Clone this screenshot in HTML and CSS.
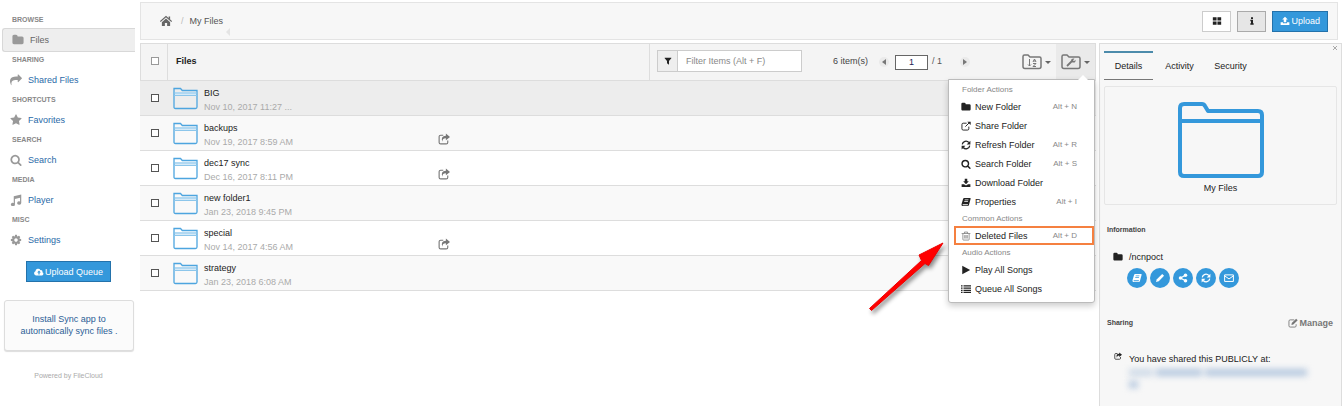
FILE: index.html
```html
<!DOCTYPE html>
<html lang="en">
<head>
<meta charset="utf-8">
<title>My Files</title>
<link rel="stylesheet" href="styles.css">
</head>
<body>
<svg class="sprite" aria-hidden="true">
  <symbol id="folder" viewBox="0 0 1792 1792"><path d="M1728 608v704q0 92-66 158t-158 66h-1216q-92 0-158-66t-66-158v-960q0-92 66-158t158-66h320q92 0 158 66t66 158v32h672q92 0 158 66t66 158z"/></symbol>
  <symbol id="forward" viewBox="0 0 1792 1792"><path d="M1792 640q0 26-19 45l-512 512q-19 19-45 19t-45-19-19-45v-256h-224q-98 0-175.500 6t-154 21.500-133 42.500-105.500 69.500-80 101-48.500 138.500-17.500 181q0 55 5 123 0 6 2.500 23.500t2.500 26.500q0 15-8.500 25t-23.500 10q-16 0-28-17-7-9-13-22t-13.500-30-10.500-24q-127-285-127-451 0-199 53-333 162-403 875-403h224v-256q0-26 19-45t45-19 45 19l512 512q19 19 19 45z"/></symbol>
  <symbol id="star" viewBox="0 0 1792 1792"><path d="M1728 647q0 22-26 48l-363 354 86 500q1 7 1 20 0 21-10.500 35.500t-30.500 14.500q-19 0-40-12l-449-236-449 236q-22 12-40 12-21 0-31.500-14.500t-10.500-35.500q0-6 2-20l86-500-364-354q-25-27-25-48 0-37 56-46l502-73 225-455q19-41 49-41t49 41l225 455 502 73q56 9 56 46z"/></symbol>
  <symbol id="search" viewBox="0 0 1792 1792"><path d="M1216 832q0-185-131.500-316.500t-316.500-131.500-316.500 131.500-131.500 316.500 131.500 316.500 316.500 131.500 316.500-131.500 131.500-316.500zm512 832q0 52-38 90t-90 38q-54 0-90-38l-343-342q-179 124-399 124-143 0-273.500-55.500t-225-150-150-225-55.500-273.500 55.500-273.500 150-225 225-150 273.500-55.500 273.500 55.500 225 150 150 225 55.500 273.500q0 220-124 399l343 343q37 37 37 90z"/></symbol>
  <symbol id="cog" viewBox="0 0 1792 1792"><path d="M1152 896q0-106-75-181t-181-75-181 75-75 181 75 181 181 75 181-75 75-181zm512-109v222q0 12-8 23t-20 13l-185 28q-19 54-39 91 35 50 107 138 10 12 10 25t-9 23q-27 37-99 108t-94 71q-12 0-26-9l-138-108q-44 23-91 38-16 136-29 186-7 28-36 28h-222q-14 0-24.500-8.500t-11.500-21.500l-28-184q-49-16-90-37l-141 107q-10 9-25 9-14 0-25-11-126-114-165-168-7-10-7-23 0-12 8-23 15-21 51-66.500t54-70.500q-27-50-41-99l-183-27q-13-2-21-12.500t-8-23.500v-222q0-12 8-23t19-13l186-28q14-46 39-92-40-57-107-138-10-12-10-24 0-10 9-23 26-36 98.500-107.500t94.500-71.500q13 0 26 10l138 107q44-23 91-38 16-136 29-186 7-28 36-28h222q14 0 24.500 8.500t11.500 21.500l28 184q49 16 90 37l142-107q9-9 24-9 13 0 25 10 129 119 165 170 7 8 7 22 0 12-8 23-15 21-51 66.500t-54 70.500q26 50 41 98l183 28q13 2 21 12.500t8 23.500z"/></symbol>
  <symbol id="music" viewBox="0 0 16 16"><path d="M5 3l10-2.500v11.500a2.700 2.200 0 1 1-1.600-2V5L6.600 6.700V14a2.700 2.200 0 1 1-1.600-2z"/></symbol>
  <symbol id="home" viewBox="0 0 16 16"><path d="M8 4.800l5.500 4.700V14.500h-4v-4h-3v4h-4V9.500z"/><path d="M.4 8.700L8 2.200l7.600 6.500" fill="none" stroke="currentColor" stroke-width="1.600"/><path d="M11.500 2h2v4l-2-1.700z"/></symbol>
  <symbol id="cloud" viewBox="0 0 16 16"><path fill-rule="evenodd" d="M3.500 13.500a3.500 3.500 0 0 1-1.200-6.700A4.300 4.300 0 0 1 10.400 5a2.500 2.500 0 0 1 3 3.200 2.800 2.800 0 0 1-.6 5.300zM8 5.500L5 8.800h2V12h2V8.800h2z"/></symbol>
  <symbol id="grid" viewBox="0 0 12 12"><path d="M1 1.500h4.500v4H1zM6.500 1.500H11v4H6.500zM1 6.500h4.500v4H1zM6.500 6.500H11v4H6.500z"/></symbol>
  <symbol id="info" viewBox="0 0 12 12"><path d="M4.500.5h3v2.500h-3zM3.500 4.200h4v5.300h1v2h-5v-2h1V6.200h-1z"/></symbol>
  <symbol id="upload" viewBox="0 0 16 16"><path d="M8 1l4.500 4.700H10V10H6V5.700H3.500zM1 10h3.800v1.500h6.400V10H15v4.500H1z"/></symbol>
  <symbol id="download" viewBox="0 0 16 16"><path d="M6 1h4v4.300h2.500L8 10 3.500 5.300H6zM1 10h3.800l3.200 2 3.200-2H15v4.500H1z"/></symbol>
  <symbol id="filter" viewBox="0 0 12 12"><path d="M1 1h10v1L7.500 6v5.500l-3-2V6L1 2z"/></symbol>
  <symbol id="external" viewBox="0 0 16 16"><path d="M9 3.500H3.500a2 2 0 0 0-2 2v7a2 2 0 0 0 2 2h7a2 2 0 0 0 2-2V9M7 9l6-6" fill="none" stroke="currentColor" stroke-width="1.500"/><path d="M10 1h5.500v5.500z"/></symbol>
  <symbol id="refresh" viewBox="0 0 16 16"><path d="M2 7a6 6 0 0 1 10.500-3M14 9a6 6 0 0 1-10.500 3" fill="none" stroke="currentColor" stroke-width="2"/><path d="M15 1v6H9zM1 15V9h6z"/></symbol>
  <symbol id="book" viewBox="0 0 16 16"><path fill-rule="evenodd" d="M5 1.500h9.500q1.200.2.900 1.400l-2.600 9.600q-.4 2-2 2H2.500Q.2 14 .8 11.500L3.300 3Q3.800 1.500 5 1.500zM6 4l-.3 1h6l.3-1zm-.7 2.500l-.3 1h6l.3-1zM2.700 11.700q-.4 1.300.6 1.300h7.400l.5-1.300z"/></symbol>
  <symbol id="trash" viewBox="0 0 16 16"><path d="M3 4.500v9q0 1 1 1h8q1 0 1-1v-9M1 4h14M5.500 4V1.700h5V4M6 6.500v5.500M8 6.500v5.500M10 6.500v5.500" fill="none" stroke="currentColor" stroke-width="1.200"/></symbol>
  <symbol id="play" viewBox="0 0 12 12"><path d="M1.500 1L11 6l-9.500 5z"/></symbol>
  <symbol id="list" viewBox="0 0 16 16"><path d="M0 2h2.500v2H0zM4 2h12v2H4zM0 5.500h2.500v2H0zM4 5.500h12v2H4zM0 9h2.500v2H0zM4 9h12v2H4zM0 12.500h2.500v2H0zM4 12.500h12v2H4z"/></symbol>
  <symbol id="shared" viewBox="0 0 16 16"><path d="M7 3H3.500a2 2 0 0 0-2 2v7.500a2 2 0 0 0 2 2H11a2 2 0 0 0 2-2V10" fill="none" stroke="currentColor" stroke-width="1.500"/><path d="M10.500.8L16 5.300l-5.500 4.500V7Q6 6.800 5.800 11.500 3 4 10.500 3.600z"/></symbol>
  <symbol id="pencil" viewBox="0 0 16 16"><path d="M11.500 1.500l3 3L6 13l-4.500 1.500L3 10z"/></symbol>
  <symbol id="nodes" viewBox="0 0 16 16"><path d="M12 3.500L4 8l8 4.500" fill="none" stroke="currentColor" stroke-width="2"/><circle cx="12" cy="3.500" r="2.800"/><circle cx="4" cy="8" r="2.800"/><circle cx="12" cy="12.500" r="2.800"/></symbol>
  <symbol id="mail" viewBox="0 0 16 16"><path d="M1 3h14v10.500H1zM1 4.500l7 5 7-5" fill="none" stroke="currentColor" stroke-width="1.600"/></symbol>
  <symbol id="edit" viewBox="0 0 16 16"><path d="M10 3H3.500a2 2 0 0 0-2 2v7.500a2 2 0 0 0 2 2H11a2 2 0 0 0 2-2V10" fill="none" stroke="currentColor" stroke-width="1.400"/><path d="M13 1l2.500 2.500-7 7L5.500 11 6 8z"/></symbol>
  <symbol id="bigfolder" viewBox="0 0 86 76"><path d="M2 19V6q0-4 4-4h18q2 0 3 2l3 5h50q4 0 4 4v57q0 4-4 4H6q-4 0-4-4zh82" fill="none" stroke="#3498db" stroke-width="4" stroke-linejoin="round"/></symbol>
  <symbol id="rowfolder" viewBox="0 0 25 23"><path d="M1 5h23v3H1z" fill="#d5eaf8"/><path d="M1 20V1.500h6.500l1.800 2H24V20q0 1.500-1.500 1.500h-20Q1 21.500 1 20z" fill="none" stroke="#4da5df" stroke-width="1.300"/><path d="M1 6h23M1 8.500h23" stroke="#8cc6eb" fill="none"/></symbol>
  <symbol id="toolfolder" viewBox="0 0 20 16"><path d="M1 12.500v-10Q1 1 2.500 1H6l2 2h9.500Q19 3 19 4.500v8q0 2-2 2H3q-2 0-2-2z" fill="none" stroke="currentColor" stroke-width="1.500"/></symbol>
</svg>

<div class="app">
  <nav class="sidebar">
    <h2 class="label">BROWSE</h2>
    <a class="nav active" href="#"><svg class="icon large"><use href="#folder"/></svg>Files</a>
    <h2 class="label">SHARING</h2>
    <a class="nav" href="#"><svg class="icon large"><use href="#forward"/></svg>Shared Files</a>
    <h2 class="label">SHORTCUTS</h2>
    <a class="nav" href="#"><svg class="icon large"><use href="#star"/></svg>Favorites</a>
    <h2 class="label">SEARCH</h2>
    <a class="nav" href="#"><svg class="icon large"><use href="#search"/></svg>Search</a>
    <h2 class="label">MEDIA</h2>
    <a class="nav" href="#"><svg class="icon large"><use href="#music"/></svg>Player</a>
    <h2 class="label">MISC</h2>
    <a class="nav" href="#"><svg class="icon large"><use href="#cog"/></svg>Settings</a>
    <button class="primary queue"><svg class="icon"><use href="#cloud"/></svg>Upload Queue</button>
    <a class="sync" href="#">Install Sync app to automatically sync files .</a>
    <p class="powered">Powered by FileCloud</p>
  </nav>

  <main class="main">
    <header class="topbar">
      <a class="home" href="#" aria-label="Home"><svg class="icon large"><use href="#home"/></svg></a>
      <span class="slash">/</span>
      <a class="crumb" href="#">My Files</a>
      <svg class="back" viewBox="0 0 4 8"><path d="M4 0v8L0 4z"/></svg>
      <div class="actions">
        <button class="square" aria-label="Grid view"><svg class="icon"><use href="#grid"/></svg></button>
        <button class="square pressed" aria-label="Details"><svg class="icon small"><use href="#info"/></svg></button>
        <button class="primary"><svg class="icon"><use href="#upload"/></svg>Upload</button>
      </div>
    </header>

    <div class="content">
      <table class="files">
        <thead>
          <tr>
            <th class="pick"><input class="check pale" type="checkbox" aria-label="Select all"></th>
            <th class="title">Files</th>
            <th class="tools">
              <div class="toolbar">
                <div class="filter">
                  <label class="addon" for="filter-box"><svg class="icon small"><use href="#filter"/></svg></label>
                  <input class="filterbox" id="filter-box" type="text" placeholder="Filter Items (Alt + F)">
                </div>
                <span class="count">6 item(s)</span>
                <button class="pager" aria-label="Previous page"><svg viewBox="0 0 10 10"><path d="M7 2v6L3 5z"/></svg></button>
                <input class="page" type="text" value="1" aria-label="Page">
                <span class="total">/ <span class="pages">1</span></span>
                <button class="pager next" aria-label="Next page"><svg viewBox="0 0 10 10"><path d="M3 2v6l4-3z"/></svg></button>
                <button class="tool" aria-label="Sort">
                  <svg class="toolicon" viewBox="0 0 20 16"><use href="#toolfolder"/><path d="M7.500 5v7M6 10.500L7.500 12 9 10.500M11 8l1.500-3L14 8M11.500 7h2M11 9.500h3l-3 3h3" fill="none" stroke="currentColor"/></svg>
                  <span class="caret"></span>
                </button>
                <div class="toolwrap">
                  <button class="tool open" aria-label="Folder actions">
                    <svg class="toolicon" viewBox="0 0 20 16"><use href="#toolfolder"/><path d="M6 12l5-5" fill="none" stroke="currentColor" stroke-width="1.800"/><path d="M13.500 4.700L12 6.200l1 1 1.500-1.500Q15 9 11.500 8.500L10 7q0-3 3.500-2.300z"/></svg>
                    <span class="caret"></span>
                  </button>
                  <div class="menu">
                    <h3 class="group">Folder Actions</h3>
                    <button class="entry"><svg class="icon"><use href="#folder"/></svg>New Folder<kbd>Alt + N</kbd></button>
                    <button class="entry"><svg class="icon"><use href="#external"/></svg>Share Folder</button>
                    <button class="entry"><svg class="icon"><use href="#refresh"/></svg>Refresh Folder<kbd>Alt + R</kbd></button>
                    <button class="entry"><svg class="icon"><use href="#search"/></svg>Search Folder<kbd>Alt + S</kbd></button>
                    <button class="entry"><svg class="icon"><use href="#download"/></svg>Download Folder</button>
                    <button class="entry"><svg class="icon"><use href="#book"/></svg>Properties<kbd>Alt + I</kbd></button>
                    <h3 class="group">Common Actions</h3>
                    <button class="entry marked"><svg class="icon"><use href="#trash"/></svg>Deleted Files<kbd>Alt + D</kbd></button>
                    <h3 class="group">Audio Actions</h3>
                    <button class="entry"><svg class="icon"><use href="#play"/></svg>Play All Songs</button>
                    <button class="entry"><svg class="icon"><use href="#list"/></svg>Queue All Songs</button>
                  </div>
                </div>
              </div>
            </th>
          </tr>
        </thead>
        <tbody>
          <tr class="current"><td class="pick"><input class="check" type="checkbox" aria-label="BIG"></td><td colspan="2"><div class="file"><svg class="thumb"><use href="#rowfolder"/></svg><div class="names"><b>BIG</b><time>Nov 10, 2017 11:27 ...</time></div></div></td></tr>
          <tr><td class="pick"><input class="check" type="checkbox" aria-label="backups"></td><td colspan="2"><div class="file"><svg class="thumb"><use href="#rowfolder"/></svg><div class="names"><b>backups</b><time>Nov 19, 2017 8:59 AM</time></div><svg class="icon large share"><use href="#shared"/></svg></div></td></tr>
          <tr><td class="pick"><input class="check" type="checkbox" aria-label="dec17 sync"></td><td colspan="2"><div class="file"><svg class="thumb"><use href="#rowfolder"/></svg><div class="names"><b>dec17 sync</b><time>Dec 16, 2017 8:11 PM</time></div><svg class="icon large share"><use href="#shared"/></svg></div></td></tr>
          <tr><td class="pick"><input class="check" type="checkbox" aria-label="new folder1"></td><td colspan="2"><div class="file"><svg class="thumb"><use href="#rowfolder"/></svg><div class="names"><b>new folder1</b><time>Jan 23, 2018 9:45 PM</time></div></div></td></tr>
          <tr><td class="pick"><input class="check" type="checkbox" aria-label="special"></td><td colspan="2"><div class="file"><svg class="thumb"><use href="#rowfolder"/></svg><div class="names"><b>special</b><time>Nov 14, 2017 4:56 AM</time></div><svg class="icon large share"><use href="#shared"/></svg></div></td></tr>
          <tr><td class="pick"><input class="check" type="checkbox" aria-label="strategy"></td><td colspan="2"><div class="file"><svg class="thumb"><use href="#rowfolder"/></svg><div class="names"><b>strategy</b><time>Jan 23, 2018 6:08 AM</time></div></div></td></tr>
        </tbody>
      </table>

      <aside class="details">
        <button class="close" aria-label="Close"><svg viewBox="0 0 6 6"><path d="M1 1l4 4M5 1L1 5" stroke="currentColor"/></svg></button>
        <div class="tabs">
          <button class="tab chosen">Details</button>
          <button class="tab">Activity</button>
          <button class="tab">Security</button>
        </div>
        <figure class="preview">
          <svg class="big"><use href="#bigfolder"/></svg>
          <figcaption>My Files</figcaption>
        </figure>
        <h2 class="heading">Information</h2>
        <div class="path"><svg class="icon"><use href="#folder"/></svg>/ncnpoct</div>
        <div class="rounds">
          <button class="round" aria-label="Properties"><svg class="icon"><use href="#book"/></svg></button>
          <button class="round" aria-label="Rename"><svg class="icon"><use href="#pencil"/></svg></button>
          <button class="round" aria-label="Share"><svg class="icon"><use href="#nodes"/></svg></button>
          <button class="round" aria-label="Refresh"><svg class="icon"><use href="#refresh"/></svg></button>
          <button class="round" aria-label="Email"><svg class="icon"><use href="#mail"/></svg></button>
        </div>
        <div class="sharing">
          <h2 class="heading">Sharing</h2>
          <a class="manage" href="#"><svg class="icon"><use href="#edit"/></svg>Manage</a>
        </div>
        <div class="public">
          <svg class="icon small"><use href="#shared"/></svg>
          <div>
            <p class="note">You have shared this PUBLICLY at:</p>
            <div class="hidden"><i class="smear dim"></i><i class="smear"></i><i class="smear wide"></i></div>
            <div class="hidden"><i class="smear tiny"></i></div>
          </div>
        </div>
      </aside>
    </div>
  </main>
</div>

<svg class="arrow" viewBox="0 0 90 80"><path d="M4.500 69.500L56.500 21.500 54 16 78 4 63.500 26.500 60 24.500 6.500 71.500z" fill="#f00" stroke="#e00"/></svg>
</body>
</html>
```
FILE: styles.css
```css
* { box-sizing: border-box; }

body {
  margin: 0;
  background: #fff;
  color: #222;
  font: 9px/14px "Liberation Sans", Arial, sans-serif;
}

h2, h3, p, figure { margin: 0; }
a { text-decoration: none; }

button, input {
  font: inherit;
  color: inherit;
  margin: 0;
  padding: 0;
  border: 0;
  border-radius: 0;
  background: none;
}

svg { fill: currentColor; flex: none; display: block; }
.sprite { position: absolute; width: 0; height: 0; }
.icon { width: 10px; height: 10px; }
.icon.small { width: 8px; height: 8px; }
.icon.large { width: 12px; height: 12px; }

.app { display: flex; min-height: 100vh; }

/* Sidebar */
.sidebar { width: 140px; flex: none; padding: 12px 5px 0 2px; }
.label {
  height: 16px;
  padding-left: 10px;
  font-size: 7px;
  line-height: 16px;
  color: #888;
}
.nav {
  display: flex;
  align-items: center;
  gap: 6px;
  height: 24px;
  padding-left: 8px;
  color: #2a6aa8;
}
.nav .icon { color: #999; }
.nav.active {
  padding-left: 9px;
  background: #eee;
  border: 1px solid #d8d8d8;
  border-right: 0;
  border-radius: 3px 0 0 3px;
  color: #666;
}

.primary {
  display: flex;
  align-items: center;
  justify-content: center;
  gap: 1px;
  height: 21px;
  padding: 0 7px;
  background: #3498db;
  border: 1px solid #2372ab;
  color: #fff;
}
.queue { margin: 9px auto 0 24px; }
.sync {
  display: block;
  margin: 18px 1px 0 2px;
  padding: 12px 12px;
  height: 51px;
  border: 1px solid #ddd;
  border-radius: 3px;
  background: #fbfbfb;
  box-shadow: 0 1px 1px #ddd;
  color: #2b5e96;
  line-height: 12px;
  text-align: center;
}
.powered {
  margin: 18px 0 0;
  text-align: center;
  font-size: 7px;
  color: #aaa;
}

/* Breadcrumb bar */
.main { flex: 1; min-width: 0; display: flex; flex-direction: column; }
.topbar {
  display: flex;
  align-items: center;
  height: 38px;
  margin: 2px 5px 3px 0;
  padding: 0 9px 0 19px;
  border: 1px solid #e4e4e4;
  background: #f7f7f7;
}
.home { color: #666; }
.slash { margin: 0 6px 0 9px; color: #bbb; }
.crumb { color: #555; }
.back { width: 4px; height: 8px; margin: 22px 0 0 3px; color: #e4e4e4; }
.actions { display: flex; gap: 6px; margin-left: auto; }
.square {
  display: flex;
  align-items: center;
  justify-content: center;
  width: 29px;
  height: 21px;
  border: 1px solid #ccc;
  background: #fff;
}
.square.pressed { background: #e6e6e6; border-color: #aaa; }

/* File list */
.content { flex: 1; display: flex; align-items: flex-start; gap: 3px; padding-right: 1px; }
.files { flex: 1; border-spacing: 0; table-layout: fixed; }
.files th, .files td { padding: 0; text-align: left; }
.files thead th {
  height: 38px;
  background: #f4f4f4;
  border: 1px solid #ddd;
  border-left: 0;
  font-weight: normal;
}
.files .pick { width: 28px; padding-left: 11px; }
.files thead .pick { border-left: 1px solid #ddd; padding: 0 0 3px 10px; }
.files thead .title { width: 482px; padding: 0 0 3px 8px; font-weight: bold; }
.check {
  display: block;
  appearance: none;
  width: 8px;
  height: 8px;
  border: 1px solid #555;
  background: #fff;
}
.check.pale { border-color: #999; }

.files tbody td { height: 35px; border-bottom: 1px solid #ddd; background: #fff; }
.files tbody tr:nth-child(even) td { background: #f9f9f9; }
.files tbody tr.current td { background: #ededed; }
.file { display: flex; align-items: center; padding-left: 5px; }
.thumb { width: 25px; height: 23px; margin-right: 6px; }
.names { width: 234px; padding-top: 3px; }
.names b, .names time { display: block; font-weight: normal; }
.names time { color: #aaa; }
.share { color: #777; margin-top: 12px; }

.toolbar { display: flex; align-items: center; height: 36px; padding-left: 7px; }
.filter { display: flex; height: 22px; margin-bottom: 2px; }
.addon {
  display: flex;
  align-items: center;
  justify-content: center;
  width: 21px;
  border: 1px solid #ccc;
  background: #eee;
}
.filterbox {
  width: 124px;
  padding: 0 8px;
  border: 1px solid #ccc;
  border-left: 0;
  background: #fff;
}
.filterbox::placeholder { color: #888; }
.count { margin: 0 0 3px 31px; color: #444; }
.pager {
  width: 10px;
  height: 10px;
  margin: 0 6px 0 11px;
  border-radius: 50%;
  background: #eaeaea;
  color: #777;
}
.page {
  width: 33px;
  height: 15px;
  border: 1px solid #666;
  background: #fff;
  text-align: center;
  color: #225;
}
.total { margin: 0 0 2px 4px; color: #555; }
.pager.next { margin: 0 auto 0 18px; }
.tool {
  display: flex;
  align-items: center;
  gap: 3px;
  height: 36px;
  padding: 0 5px;
  color: #777;
}
.tool.open { background: #eaeaea; }
.toolicon { width: 20px; height: 16px; }
.caret { border: 3px solid transparent; border-top-color: #666; border-bottom: 0; }
.toolwrap { position: relative; }

.menu {
  position: absolute;
  top: 35px;
  right: 0;
  z-index: 2;
  width: 147px;
  padding: 2px 0 4px;
  border: 1px solid #bbb;
  border-radius: 0 0 3px 3px;
  background: #fff;
  box-shadow: 0 3px 6px rgba(0, 0, 0, .2);
}
.menu::before {
  content: "";
  position: absolute;
  top: -5px;
  right: 6px;
  border: 5px solid transparent;
  border-top: 0;
  border-bottom-color: #fff;
}
.group {
  padding-left: 13px;
  font-size: 8px;
  line-height: 15px;
  font-weight: normal;
  color: #888;
}
.entry {
  display: flex;
  align-items: center;
  gap: 4px;
  width: 100%;
  height: 19px;
  padding: 0 17px 0 12px;
  text-align: left;
  white-space: nowrap;
}
.entry kbd { margin-left: auto; font: 8px/14px "Liberation Sans", Arial, sans-serif; color: #888; }
.marked { outline: 2px solid #f58040; outline-offset: -2px; width: 140px; margin-left: 5px; padding: 0 17px 0 7px; }
.marked .icon { color: #777; }

/* Details panel */
.details {
  position: relative;
  align-self: stretch;
  width: 243px;
  flex: none;
  padding: 7px 4px 0;
  border: 1px solid #ddd;
  border-bottom: 0;
  background: #f7f7f7;
}
.close { position: absolute; top: 1px; right: 3px; width: 6px; height: 6px; color: #aaa; }
.tabs { display: flex; gap: 2px; }
.tab { height: 29px; width: 49px; }
.tab.chosen { border-top: 2px solid #4c8bab; border-bottom: 1px solid #777; }
.preview {
  display: flex;
  flex-direction: column;
  align-items: center;
  height: 119px;
  margin-top: 6px;
  padding-top: 15px;
  border: 1px solid #e6e6e6;
  border-radius: 2px;
}
.big { width: 86px; height: 76px; }
.preview figcaption { margin-top: 3px; }
.heading { font-size: 7px; line-height: 14px; color: #444; padding-left: 3px; }
.preview + .heading { margin-top: 18px; }
.path { display: flex; align-items: center; gap: 6px; margin: 13px 0 0 9px; }
.rounds { display: flex; gap: 3px; margin: 4px 0 0 23px; }
.round {
  display: flex;
  align-items: center;
  justify-content: center;
  width: 20px;
  height: 20px;
  border-radius: 50%;
  background: #3498db;
  color: #fff;
}
.sharing { display: flex; justify-content: space-between; align-items: center; margin: 28px 4px 0 0; }
.manage { display: flex; align-items: center; gap: 1px; font-weight: bold; color: #777; }
.public { display: flex; gap: 7px; margin: 22px 0 0 10px; }
.note { white-space: nowrap; }
.hidden { display: flex; gap: 3px; height: 12px; align-items: center; filter: blur(3px); }
.smear { width: 46px; height: 7px; background: #b5c8df; }
.smear.dim { width: 24px; background: #cdd9e7; }
.smear.wide { width: 102px; }
.smear.tiny { width: 9px; }

/* Pointer annotation */
.arrow {
  position: absolute;
  left: 865px;
  top: 239px;
  z-index: 3;
  width: 90px;
  height: 80px;
  filter: drop-shadow(2px 3px 2px rgba(0, 0, 0, .45));
}
```
